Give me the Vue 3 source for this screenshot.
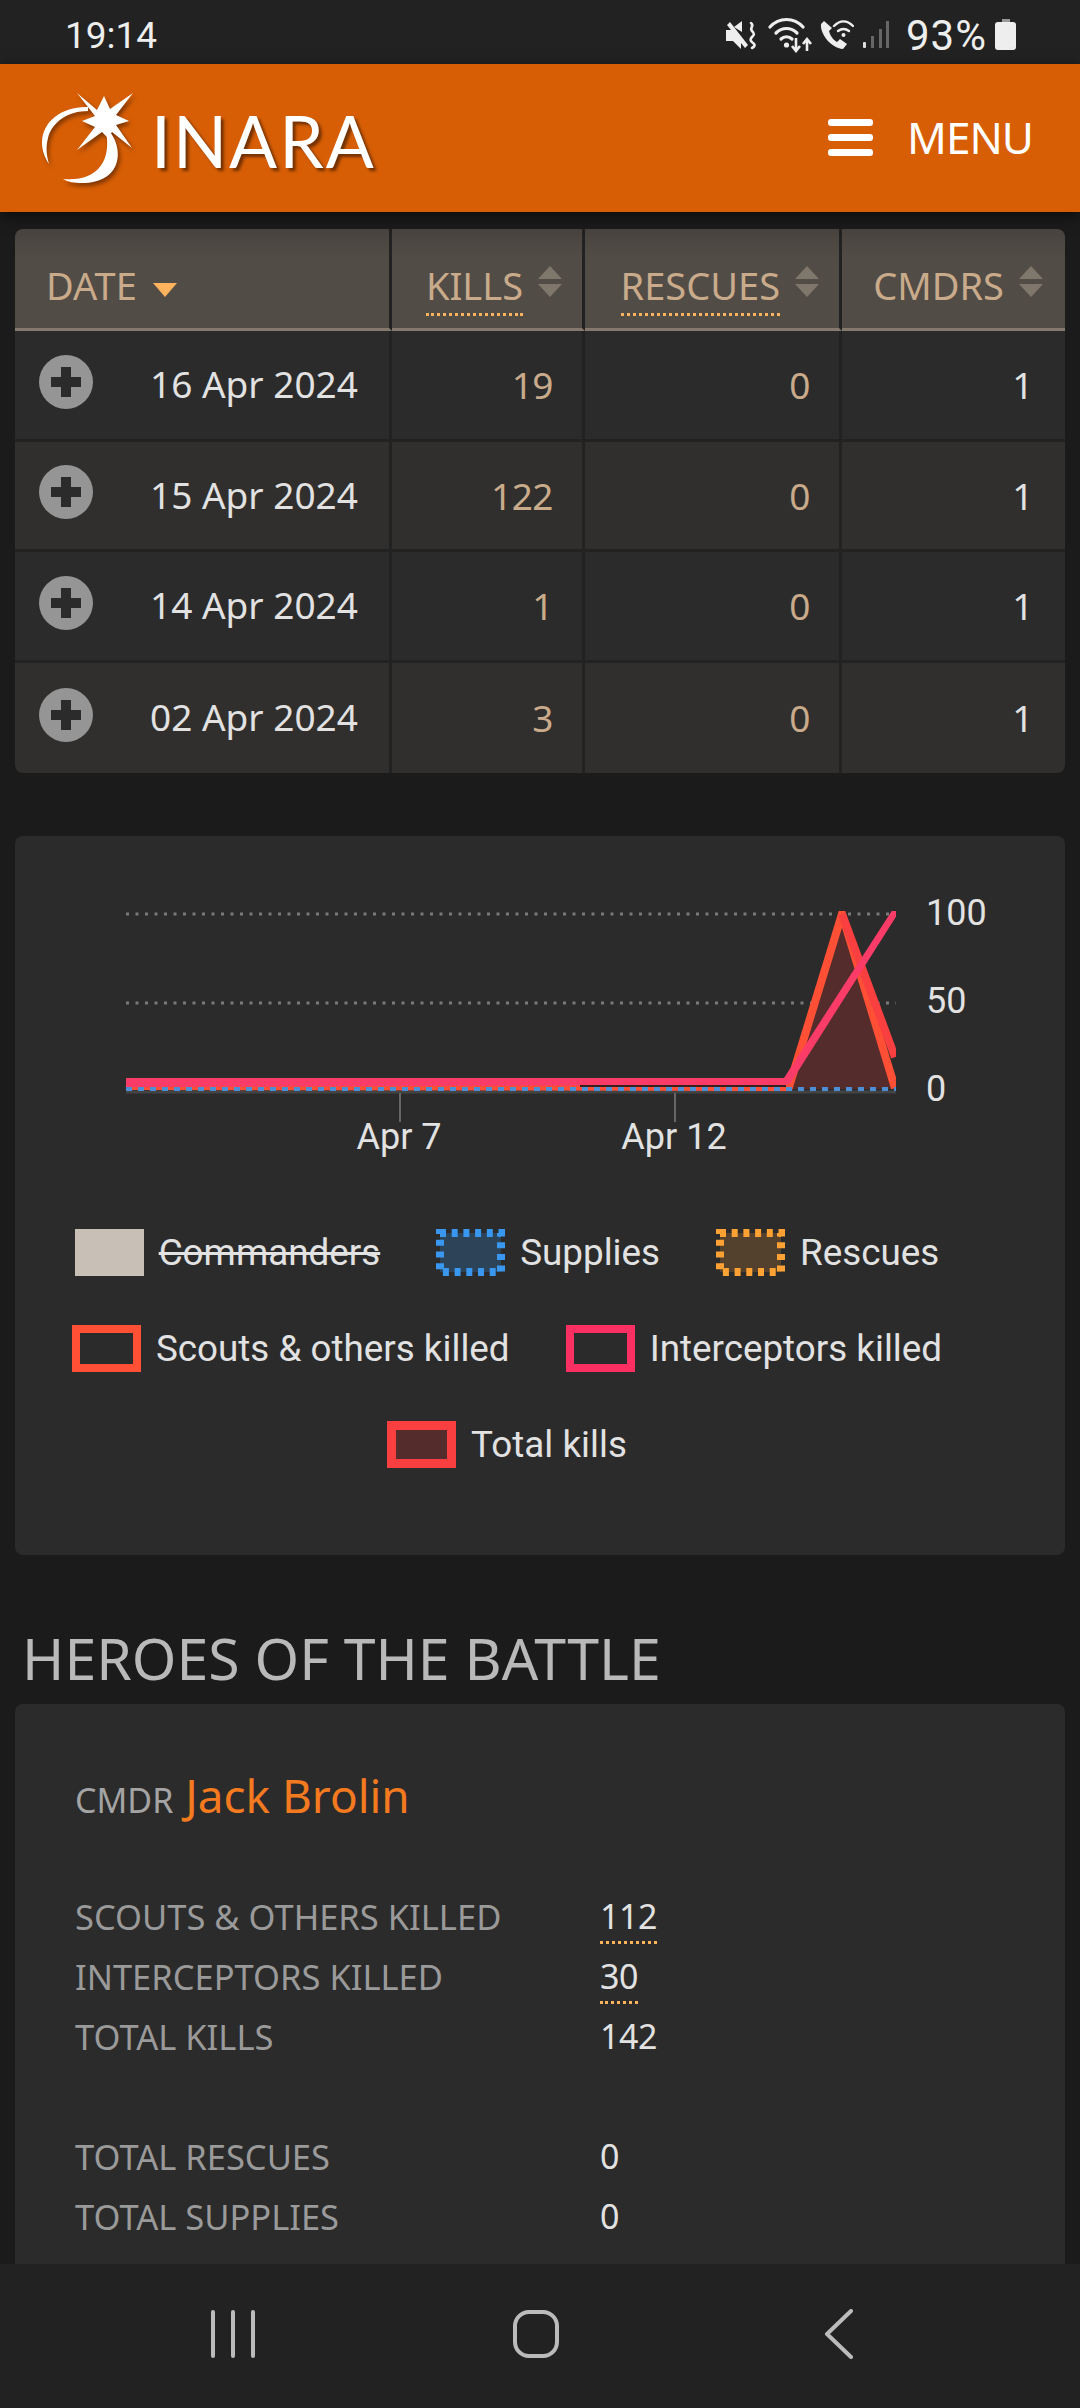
<script setup>
const rows = [
  { date: '16 Apr 2024', kills: 19, rescues: 0, cmdrs: 1 },
  { date: '15 Apr 2024', kills: 122, rescues: 0, cmdrs: 1 },
  { date: '14 Apr 2024', kills: 1, rescues: 0, cmdrs: 1 },
  { date: '02 Apr 2024', kills: 3, rescues: 0, cmdrs: 1 }
]
const kills = [
  { label: 'SCOUTS & OTHERS KILLED', value: 112, dotted: true },
  { label: 'INTERCEPTORS KILLED', value: 30, dotted: true },
  { label: 'TOTAL KILLS', value: 142 }
]
const totals = [
  { label: 'TOTAL RESCUES', value: 0 },
  { label: 'TOTAL SUPPLIES', value: 0 }
]
</script>

<template>
  <div class="phone">
    <div class="status">
      <span class="clock">19:14</span>
      <div class="status-right">
        <svg class="st-mute" viewBox="0 0 32 30" width="32" height="30">
          <path d="M1 10h5L2 5l3-3 18 23-3 3-4-5v6L8 21H1z" fill="#eee"/>
          <path d="M9 7l8-6v11z" fill="#eee"/>
          <path d="M26 3c4 3-2 5 1 8s2 4 0 6-2 4 1 6 1 4-1 5" fill="none" stroke="#eee" stroke-width="2.6" stroke-linecap="round"/>
        </svg>
        <svg class="st-wifi" viewBox="0 0 46 36" width="46" height="36">
          <g fill="none" stroke="#eee" stroke-width="3.2" stroke-linecap="round">
            <path d="M2 10C11 0 26 0 35 10"/>
            <path d="M8 16c6-6 15-6 21 0"/>
            <path d="M13 22c3-3 8-3 11 0"/>
          </g>
          <circle cx="18.5" cy="28" r="2.6" fill="#eee"/>
          <path d="M28 21v13m-4-5 4 5 4-5M39 34V22m-4 5 4-5 4 5" fill="none" stroke="#eee" stroke-width="2.6"/>
        </svg>
        <svg class="st-call" viewBox="0 0 34 30" width="34" height="30">
          <path d="M4 1 1 4c-1 10 10 24 22 25l4-5-7-5-3 3c-4-2-7-7-8-11l3-3z" fill="#eee"/>
          <g fill="none" stroke="#eee" stroke-width="2.4" stroke-linecap="round">
            <path d="M14 6c6-6 13-6 19 0"/>
            <path d="M18 11c4-3 7-3 11 0"/>
          </g>
          <circle cx="23.5" cy="15" r="2" fill="#eee"/>
        </svg>
        <svg class="st-signal" viewBox="0 0 28 30" width="28" height="30">
          <rect x="1" y="22" width="3" height="6" rx="1" fill="#ddd"/>
          <rect x="9" y="16" width="3" height="12" fill="#666"/>
          <rect x="17" y="9" width="3" height="19" fill="#666"/>
          <rect x="24" y="1" width="3" height="27" fill="#666"/>
        </svg>
        <span class="percent">93%</span>
        <svg class="st-batt" viewBox="0 0 22 32" width="22" height="32">
          <path d="M7 0h8v3H7z" fill="#999"/>
          <rect x="0" y="3" width="21" height="28" rx="3" fill="#eee"/>
        </svg>
      </div>
    </div>

    <header class="topbar">
      <div class="brand">
        <svg class="logo" viewBox="40 84 96 92" width="96" height="92">
          <path d="M77 85 97 102 104 88 110 101 133 85 116 107 129 113 116 117 132 140 112 124 108 130 102 124 77 142 95 119 82 113 95 108z" fill="#fff"/>
          <path d="M88 99C64 98 42 112 42 135 42 143 45 150 49 156 46 146 46 138 48 130 52 114 68 103 88 103z" fill="#fff"/>
          <path d="M110 124C124 142 122 175 82 175 74 175 68 174 63 171 95 174 112 155 106 124z" fill="#fff"/>
        </svg>
        <span class="wordmark">INARA</span>
      </div>
      <div class="menu">
        <span class="burger"><i></i><i></i><i></i></span>
        <span class="menu-label">MENU</span>
      </div>
    </header>

    <main class="content">
      <table class="kills-table">
        <colgroup>
          <col class="c-date"><col class="c-kills"><col class="c-rescues"><col class="c-cmdrs">
        </colgroup>
        <thead>
          <tr>
            <th class="th-left">DATE <span class="caret"></span></th>
            <th><span class="dotted">KILLS</span><span class="sort"><i class="up"></i><i class="down"></i></span></th>
            <th><span class="dotted">RESCUES</span><span class="sort"><i class="up"></i><i class="down"></i></span></th>
            <th>CMDRS<span class="sort"><i class="up"></i><i class="down"></i></span></th>
          </tr>
        </thead>
        <tbody>
          <tr v-for="row in rows" :key="row.date">
            <td class="td-date">
              <div class="date-cell">
                <svg class="plus" viewBox="0 0 54 54" width="54" height="54">
                  <circle cx="27" cy="27" r="27" fill="#959595"/>
                  <path d="M22 12h10v10h10v10H32v10H22V32H12V22h10z" fill="#2b2b2b"/>
                </svg>
                <span>{{ row.date }}</span>
              </div>
            </td>
            <td class="num">{{ row.kills }}</td>
            <td class="num">{{ row.rescues }}</td>
            <td class="num white">{{ row.cmdrs }}</td>
          </tr>
        </tbody>
      </table>

      <section class="card chart-card">
        <svg class="chart" viewBox="15 836 1050 334" width="1050" height="334">
          <defs>
            <clipPath id="plot"><rect x="126" y="911" width="770" height="180"/></clipPath>
          </defs>
          <g stroke="#7a7a7a" stroke-width="3" stroke-dasharray="3 6.5">
            <path d="M126 914H896"/>
            <path d="M126 1003H896"/>
          </g>
          <path d="M126 1092H896" stroke="#444" stroke-width="3"/>
          <path d="M400 1093v29M675 1093v29" stroke="#666" stroke-width="2"/>
          <g clip-path="url(#plot)" fill="none">
            <path d="M789 1089 842 914 895 1089z" fill="#552c2c" stroke="none"/>
            <path d="M126 1086 789 1087 842 914 895 1088" stroke="#ff5036" stroke-width="8"/>
            <path d="M842 914 895 1057" stroke="#f93f3f" stroke-width="8"/>
            <path d="M126 1078V1087L782 1085 790 1084 899 912 893 909 784 1078z" fill="#fb3b68"/>
            <path d="M580 1086H786" stroke="#3a1f1f" stroke-width="2"/>
          </g>
          <path d="M126 1089H896" stroke="#4d8fd6" stroke-width="4" stroke-dasharray="6 6"/>
          <g class="chart-text">
            <text x="926" y="925">100</text>
            <text x="926" y="1013">50</text>
            <text x="926" y="1101">0</text>
            <text x="399" y="1149" text-anchor="middle">Apr 7</text>
            <text x="674" y="1149" text-anchor="middle">Apr 12</text>
          </g>
        </svg>

        <div class="legend">
          <div class="legend-row">
            <span class="item">
              <span class="swatch solid"></span>
              <span class="struck">Commanders</span>
            </span>
            <span class="item">
              <svg class="dash" viewBox="0 0 69 47" width="69" height="47">
                <rect x="4" y="4" width="61" height="39" fill="#2d4357" stroke="#3a97f0" stroke-width="8" stroke-dasharray="6 5.7"/>
              </svg>
              <span>Supplies</span>
            </span>
            <span class="item">
              <svg class="dash" viewBox="0 0 69 47" width="69" height="47">
                <rect x="4" y="4" width="61" height="39" fill="#54412d" stroke="#ffa133" stroke-width="8" stroke-dasharray="6 5.7"/>
              </svg>
              <span>Rescues</span>
            </span>
          </div>
          <div class="legend-row">
            <span class="item">
              <span class="swatch scouts"></span>
              <span>Scouts &amp; others killed</span>
            </span>
            <span class="item">
              <span class="swatch interceptors"></span>
              <span>Interceptors killed</span>
            </span>
          </div>
          <div class="legend-row">
            <span class="item">
              <span class="swatch total"></span>
              <span>Total kills</span>
            </span>
          </div>
        </div>
      </section>

      <h2 class="heroes">HEROES OF THE BATTLE</h2>

      <section class="card hero-card">
        <div class="cmdr"><span class="cmdr-tag">CMDR</span> <span class="cmdr-name">Jack Brolin</span></div>
        <div class="stats">
          <template v-for="s in kills" :key="s.label">
            <span class="stat-label">{{ s.label }}</span>
            <span class="stat-value"><span :class="{ dotted: s.dotted }">{{ s.value }}</span></span>
          </template>
        </div>
        <div class="stats second">
          <template v-for="s in totals" :key="s.label">
            <span class="stat-label">{{ s.label }}</span>
            <span class="stat-value">{{ s.value }}</span>
          </template>
        </div>
      </section>
    </main>

    <nav class="navbar">
      <svg viewBox="0 0 60 50" width="60" height="50">
        <path d="M10 3V47M30 3V47M50 3V47" stroke="#bbb" stroke-width="4" stroke-linecap="round" fill="none"/>
      </svg>
      <svg viewBox="0 0 60 50" width="60" height="50">
        <rect x="9" y="3" width="42" height="44" rx="14" stroke="#bbb" stroke-width="4" fill="none"/>
      </svg>
      <svg viewBox="0 0 60 50" width="60" height="50">
        <path d="M42 2 18 25 42 48" stroke="#bbb" stroke-width="4" stroke-linecap="round" stroke-linejoin="round" fill="none"/>
      </svg>
    </nav>
  </div>
</template>

<style scoped>
.phone { width: 1080px; height: 2408px; display: flex; flex-direction: column; overflow: hidden; background: #1b1b1b; font-family: "Noto Sans", sans-serif; color: #e2e2e2; }

.status { height: 64px; flex: none; box-sizing: border-box; background: #222; display: flex; align-items: center; justify-content: space-between; padding: 6px 63px 0 65px; font-family: Roboto, sans-serif; color: #eee; }
.clock { font-size: 37px; }
.status-right { display: flex; align-items: center; }
.st-wifi { margin-left: 11px; }
.st-call { margin-left: 6px; }
.st-signal { margin-left: 8px; }
.percent { font-size: 42px; letter-spacing: 1px; margin: 0 8px 0 16px; }

.topbar { height: 148px; flex: none; box-sizing: border-box; background: #d75e05; display: flex; align-items: center; justify-content: space-between; padding: 0 47px 0 40px; box-shadow: 0 4px 14px rgba(0, 0, 0, 0.6); position: relative; z-index: 1; }
.brand { display: flex; align-items: center; }
.logo { filter: drop-shadow(2px 3px 2px rgba(60, 25, 0, 0.6)); }
.wordmark { font-family: Lato, sans-serif; font-size: 71px; line-height: 1; letter-spacing: 2px; color: #fff; margin: 4px 0 0 15px; text-shadow: 3px 3px 3px rgba(70, 30, 0, 0.7); }
.menu { display: flex; align-items: center; gap: 34px; padding-bottom: 2px; }
.burger { display: flex; flex-direction: column; gap: 8px; width: 45px; }
.burger i { display: block; height: 7px; background: #fff; border-radius: 3px; }
.menu-label { font-size: 44px; letter-spacing: -1px; color: #fff; }

.content { flex: 1; min-height: 0; overflow: hidden; padding: 17px 15px 0; display: flex; flex-direction: column; }

.kills-table { width: 1050px; flex: none; table-layout: fixed; border-collapse: separate; border-spacing: 0; border-radius: 8px; overflow: hidden; }
.c-date { width: 377px; }
.c-kills { width: 193px; }
.c-rescues { width: 257px; }
.c-cmdrs { width: 223px; }
thead th { height: 102px; box-sizing: border-box; padding: 30px 20px 0 0; text-align: right; font-weight: 400; font-size: 38px; color: #c9ab8b; background: linear-gradient(#48433e, #524c46 30%); border-bottom: 3px solid #85796d; border-right: 3px solid #222; vertical-align: top; white-space: nowrap; }
thead th:last-child { border-right: 0; padding-right: 22px; }
.th-left { text-align: left; padding-left: 31px; }
.caret { display: inline-block; margin-left: 6px; border-left: 12px solid transparent; border-right: 12px solid transparent; border-top: 14px solid #ffb35c; vertical-align: 3px; }
.dotted { border-bottom: 3px dotted #ffb35c; padding-bottom: 2px; }
.sort { display: inline-flex; flex-direction: column; gap: 5px; margin-left: 15px; vertical-align: 14px; transform: translateY(-7px); }
.sort i { display: block; width: 0; border-left: 12px solid transparent; border-right: 12px solid transparent; }
.sort .up { border-bottom: 13px solid #7f766c; }
.sort .down { border-top: 13px solid #7f766c; }
tbody td { height: 110.5px; box-sizing: border-box; border-right: 3px solid #222; border-bottom: 3px solid #222; background: #2b2b2b; font-size: 37px; padding: 0; }
tbody td:last-child { border-right: 0; }
tbody tr:nth-child(even) td { background: #302f2d; }
tbody tr:last-child td { border-bottom: 0; }
.date-cell { display: flex; align-items: center; gap: 57px; padding: 0 0 2px 24px; }
.plus { flex: none; margin-bottom: 4px; }
.num { text-align: right; padding-right: 29px; color: #c9ab8b; letter-spacing: -0.5px; }
.num.white { color: #e2e2e2; padding-right: 32px; }

.card { background: #2b2b2b; border-radius: 8px; width: 1050px; flex: none; box-sizing: border-box; }
.chart-card { margin-top: 63px; height: 719px; }
.chart { display: block; }
.chart-text { font-family: Roboto, sans-serif; font-size: 36px; fill: #e2e2e2; }
.legend { margin: 59px 66px 0 0; display: flex; flex-direction: column; gap: 49px; font-family: Roboto, sans-serif; font-size: 36.8px; color: #e2e2e2; }
.legend-row { display: flex; justify-content: center; gap: 56px; height: 47px; }
.item { display: flex; align-items: center; gap: 15px; white-space: nowrap; }
.swatch { display: block; width: 69px; height: 47px; box-sizing: border-box; }
.dash { display: block; }
.solid { background: #c8bfb6; }
.struck { text-decoration: line-through; text-decoration-thickness: 3px; }
.scouts { border: 8px solid #ff5036; }
.interceptors { border: 8px solid #fb2f62; }
.total { border: 9px solid #f93f3f; background: #552c2c; }

.heroes { margin: 66px 0 9px 7px; font-weight: 400; font-size: 57.2px; line-height: 74px; color: #b9b9b9; white-space: nowrap; }
.hero-card { height: 640px; padding: 60px 0 0 60px; }
.cmdr { height: 70px; display: flex; align-items: baseline; gap: 12px; }
.cmdr-tag { font-size: 34px; color: #a4a4a4; }
.cmdr-name { font-size: 45.9px; color: #f47a20; }
.stats { margin-top: 52px; display: grid; grid-template-columns: 525px 1fr; grid-auto-rows: 60px; align-items: center; }
.stats.second { margin-top: 60px; }
.stat-label { font-size: 34.5px; color: #9a9a9a; }
.stat-value { font-size: 34px; letter-spacing: -0.5px; color: #e2e2e2; }

.navbar { height: 144px; flex: none; background: #222; display: flex; align-items: center; justify-content: center; gap: 243px; padding: 0 8px 4px 0; box-sizing: border-box; }
</style>

<style>
html, body { margin: 0; background: #1b1b1b; }
</style>
